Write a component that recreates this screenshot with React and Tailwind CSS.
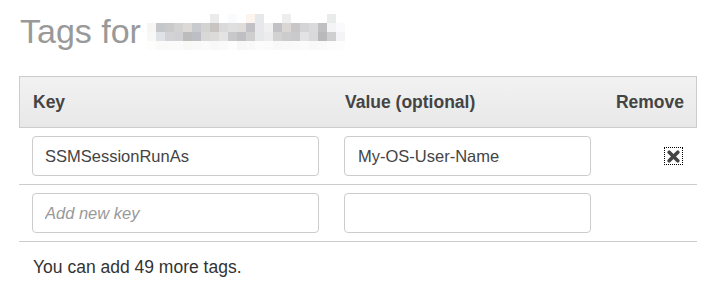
import React from "react";

// pixelated (obfuscated) resource name next to the title
const blurRows = [
    ["#fff", "#fff", "#fff", "#fff", "#fff", "#fff", "#fff", "#ebebeb", "#fff", "#fafbfc", "#fff", "#fcf5ef", "#e6e8ea", "#fff", "#fff", "#eeeeee", "#fff", "#fff", "#fff", "#fff", "#eaeceb", "#fff"],
    ["#f8f6f4", "#c6c7ca", "#c9cac9", "#d2d2d2", "#dcd9d6", "#c9cacf", "#d3d3d1", "#c7c4c2", "#dadada", "#e0dfe0", "#e0dcd9", "#c2c2c6", "#e8e8ec", "#f0f0f2", "#c2c2c4", "#d9d6d4", "#c8c6c6", "#d4d4d6", "#dadadc", "#c0c0c2", "#f4f4f6", "#fafafc"],
    ["#f8f8f8", "#dfe2e6", "#d3d3d5", "#d1d1d3", "#bdbcbd", "#bebfc4", "#d9d8d8", "#dcdbd9", "#e4e2e2", "#c8c8ca", "#c0c0c2", "#cfcfcf", "#e6e8ea", "#ececee", "#d2d2d3", "#cdcccc", "#cacacc", "#e3e3e5", "#d9d9db", "#b9b9bc", "#cfcfd1", "#f4f4f6"],
    ["#fdfdfc", "#fafaf9", "#fafafa", "#fbfbfb", "#f8f8f7", "#f9f9f9", "#fbfbfb", "#f8f8f8", "#fafafa", "#fdfdfd", "#f7f7f7", "#f9f9f9", "#fcfcfc", "#fbfbfb", "#f8f8f8", "#f9f9f9", "#fafafa", "#fbfbfb", "#f9f9f9", "#fafafa", "#fcfcfc", "#fdfdfd"],
];

const BlurredName = () => (
    <div className="ml-[6px] mt-[2px] self-start grid grid-cols-[repeat(22,9px)] grid-rows-[repeat(4,9px)]">
        {blurRows.flatMap((row, r) =>
            row.map((c, i) => <div key={`${r}-${i}`} style={{ backgroundColor: c }} />)
        )}
    </div>
);

const RemoveIcon = () => (
    <button className="w-[19px] h-[18px] flex items-center justify-center outline-1 outline-dotted outline-black -outline-offset-1">
        <svg width="13" height="13" viewBox="0 0 13 13">
            <path d="M2.2 2.2 L10.8 10.8 M10.8 2.2 L2.2 10.8" stroke="#444" strokeWidth="3.6" strokeLinecap="round" />
        </svg>
    </button>
);

const App = () => {
    return (
        <div className="min-h-screen bg-white font-['Liberation_Sans',Arial,sans-serif] text-[#444]">
            <div className="pl-[19px] pr-[14px] pt-[12px]">
                {/* Title */}
                <h1 className="flex pl-px text-[34px] leading-[38px] text-[#999]">
                    <span>Tags for</span>
                    <BlurredName />
                </h1>

                {/* Tag table */}
                <div className="mt-[26px]">
                    <div className="grid grid-cols-[312px_272px_1fr] items-center h-[52px] border border-[#ccc] bg-gradient-to-b from-[#f2f2f2] to-[#e8e8e8] text-[17.5px] font-bold">
                        <div className="pl-[13px]">Key</div>
                        <div className="pl-[13px]">Value (optional)</div>
                        <div className="pr-[12px] text-right">Remove</div>
                    </div>

                    <div className="grid grid-cols-[312px_272px_1fr] items-center pt-[8px] pb-[8px] border-b border-[#ccc]">
                        <div className="pl-[13px]">
                            <input
                                defaultValue="SSMSessionRunAs"
                                className="w-[287px] h-[40px] px-[12px] border border-[#ccc] rounded-[4px] text-[16.5px] text-[#444] outline-none"
                            />
                        </div>
                        <div className="pl-[13px]">
                            <input
                                defaultValue="My-OS-User-Name"
                                className="w-[247px] h-[40px] px-[13px] border border-[#ccc] rounded-[4px] text-[16.5px] text-[#444] outline-none"
                            />
                        </div>
                        <div className="flex justify-end pr-[14px]">
                            <RemoveIcon />
                        </div>
                    </div>

                    <div className="grid grid-cols-[312px_272px_1fr] items-center pt-[8px] pb-[8px] border-b border-[#ccc]">
                        <div className="pl-[13px]">
                            <input
                                placeholder="Add new key"
                                className="w-[287px] h-[40px] px-[12px] border border-[#ccc] rounded-[4px] text-[16.5px] text-[#444] placeholder:italic placeholder:text-[#999] outline-none"
                            />
                        </div>
                        <div className="pl-[13px]">
                            <input className="w-[247px] h-[40px] px-[13px] border border-[#ccc] rounded-[4px] text-[16.5px] outline-none" />
                        </div>
                        <div />
                    </div>

                    <p className="pl-[14px] pt-[12px] text-[17.5px] text-[#333]">You can add 49 more tags.</p>
                </div>
            </div>
        </div>
    );
};

export default App;
